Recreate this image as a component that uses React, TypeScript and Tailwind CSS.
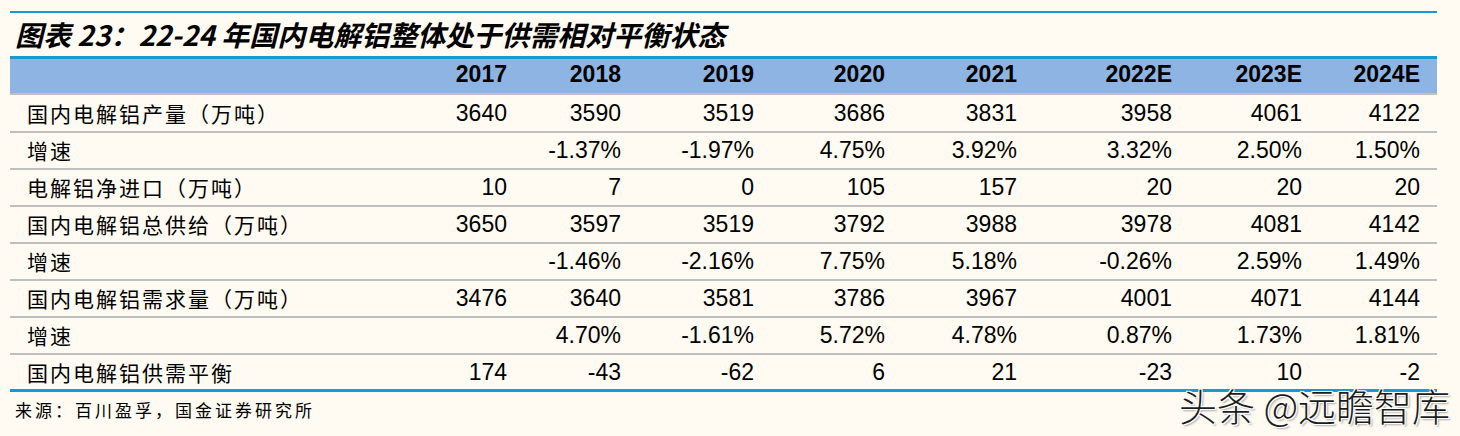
const years = ["2017", "2018", "2019", "2020", "2021", "2022E", "2023E", "2024E"];

const rows: { label: string; values: string[] }[] = [
  { label: "国内电解铝产量（万吨）", values: ["3640", "3590", "3519", "3686", "3831", "3958", "4061", "4122"] },
  { label: "增速", values: ["", "-1.37%", "-1.97%", "4.75%", "3.92%", "3.32%", "2.50%", "1.50%"] },
  { label: "电解铝净进口（万吨）", values: ["10", "7", "0", "105", "157", "20", "20", "20"] },
  { label: "国内电解铝总供给（万吨）", values: ["3650", "3597", "3519", "3792", "3988", "3978", "4081", "4142"] },
  { label: "增速", values: ["", "-1.46%", "-2.16%", "7.75%", "5.18%", "-0.26%", "2.59%", "1.49%"] },
  { label: "国内电解铝需求量（万吨）", values: ["3476", "3640", "3581", "3786", "3967", "4001", "4071", "4144"] },
  { label: "增速", values: ["", "4.70%", "-1.61%", "5.72%", "4.78%", "0.87%", "1.73%", "1.81%"] },
  { label: "国内电解铝供需平衡", values: ["174", "-43", "-62", "6", "21", "-23", "10", "-2"] },
];

const cols = "grid grid-cols-[390px_107px_114px_133px_131px_132px_155px_130px_118px] pr-[17px]";
const cjk = "font-['Noto_Sans_CJK_SC',sans-serif]";
const num = "font-['Liberation_Sans',Arial,sans-serif]";

export default function App() {
  return (
    <div className="relative h-[436px] w-[1460px] overflow-hidden bg-[#fffbf2] pt-[11px] text-black">
      <div className="ml-[10px] w-[1427px] border-t-2 border-[#1a98d5]">
        {/* Title */}
        <div
          className={`flex h-[43px] items-start pl-[5px] pt-[7px] text-[28px] font-bold italic leading-none ${cjk}`}
        >
          图表 23：22-24 年国内电解铝整体处于供需相对平衡状态
        </div>

        {/* Header band */}
        <div className={`${cols} h-[39px] items-center border-t-[3px] border-b-2 border-t-[#1a98d5] border-b-[#bfbfbf] bg-[#8db4e2] pb-[3px]`}>
          <div />
          {years.map((y) => (
            <div key={y} className={`text-right text-[23px] font-bold leading-none ${num}`}>
              {y}
            </div>
          ))}
        </div>

        {/* Body */}
        {rows.map((r, i) => (
          <div
            key={i}
            className={`${cols} items-center ${i === 0 ? "h-[38px]" : "h-[37px]"} ${
              i === rows.length - 1 ? "border-b-[3px] border-[#1a98d5]" : "border-b-2 border-[#bfbfbf]"
            }`}
          >
            <div className={`pl-[17px] text-[21px] leading-none tracking-[2px] ${cjk}`}>{r.label}</div>
            {r.values.map((v, j) => (
              <div key={j} className={`text-right text-[23px] leading-none ${num}`}>
                {v}
              </div>
            ))}
          </div>
        ))}

        {/* Source */}
        <div className={`flex h-[34px] items-center pl-[5px] text-[17px] leading-none tracking-[3px] ${cjk}`}>
          来源：百川盈孚，国金证券研究所
        </div>
      </div>

      {/* Watermark */}
      <div
        className={`absolute left-[1179px] top-[390px] whitespace-nowrap text-[38px] font-light leading-[30px] text-[#1c1c1c] [text-shadow:1px_1px_0_#fff,-1px_-1px_0_#fff,1px_-1px_0_#fff,-1px_1px_0_#fff,2px_2px_2px_rgba(0,0,0,0.35)] ${cjk}`}
      >
        头条 @远瞻智库
      </div>
    </div>
  );
}
